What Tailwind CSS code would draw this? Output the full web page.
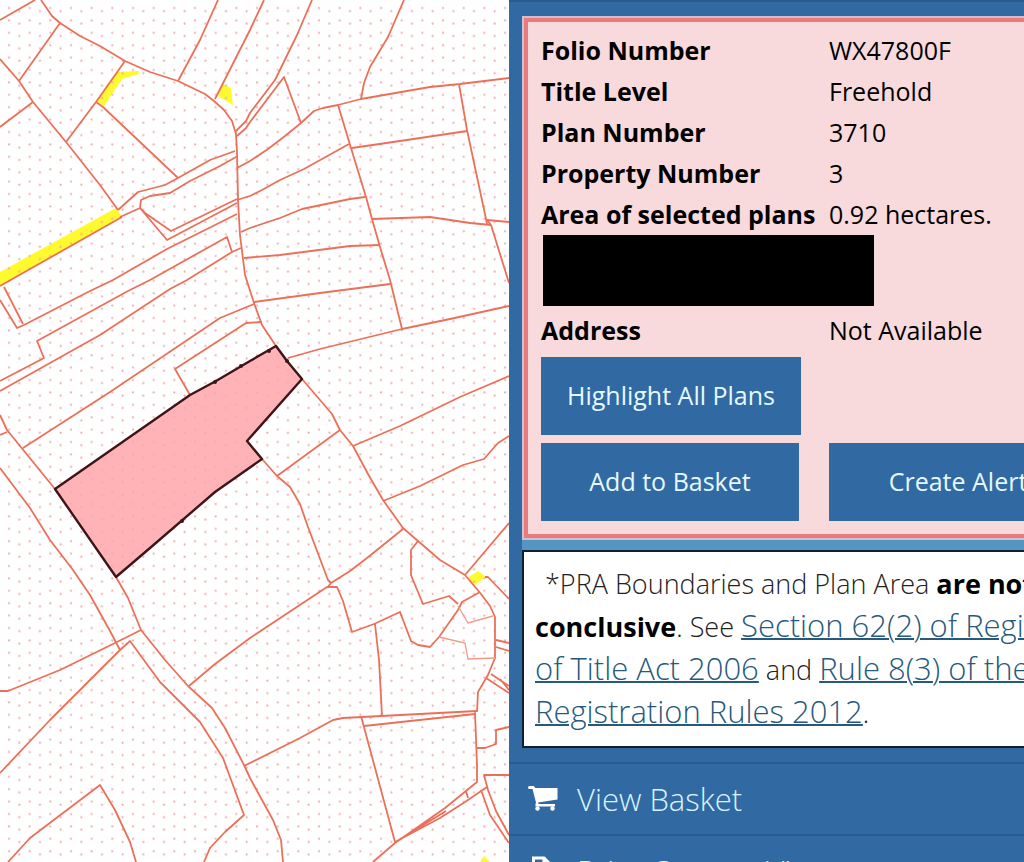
<!DOCTYPE html>
<html lang="en">
<head>
  <meta charset="UTF-8" />
  <meta name="viewport" content="width=device-width, initial-scale=1.0" />
  <title>Folio WX47800F</title>
  <script src="https://cdn.jsdelivr.net/npm/@tailwindcss/browser@4"></script>
</head>
<body class="bg-[#316aa3] font-['Open_Sans','Noto_Sans',sans-serif] text-black">
  <main class="grid grid-cols-[509fr_515fr] h-screen overflow-hidden">
    <section aria-label="Map" class="bg-white overflow-hidden">
      <svg class="w-full h-full" viewBox="0 0 509 862" preserveAspectRatio="xMinYMin slice" fill="none">
        <defs>
          <pattern id="dots" width="20.67" height="12.4" patternUnits="userSpaceOnUse">
            <circle cx="9" cy="8" r="1.100" fill="#eeaca8" />
            <circle cx="19.3" cy="11.2" r="1.100" fill="#eeaca8" />
          </pattern>
        </defs>
        <!-- rights of way -->
        <g fill="#fffa2e">
          <path d="M0 272L116 208L122 217L0 286Z" />
          <path d="M117 72L139 71L139 74L122 79L104 106L96 101Z" />
          <path d="M223 84L231 88L233 105L218 96Z" />
          <path d="M467 578L478 571L486 577L475 585Z" />
          <path d="M480 862L484 856L490 862Z" />
        </g>
        <path d="M55 489L190 395L250 361L276 346L287 361L302 379L247 441L262 459L215 492L150 548L116 577Z" fill="#ffb3b7" />
        <rect width="509" height="862" fill="url(#dots)" />
        <!-- boundaries -->
        <g stroke="#ec7059" stroke-width="1.8" stroke-linejoin="round">
          <path d="M0 20L35 0M41 0L52 16L60 23L80 36L100 46L125 61L150 72L178 81L205 94L214 101L224 110L232 121L236 134L237 152L238 200L240 235L245 275L254 303L262 325L276 346M302 379L320 400L332 414L340 430L353 446L368 474L383 500L403 528L418 541L440 560L465 575L481 594L490 606L495 617V658L488 675L478 692L477 712" />
          <path d="M60 23L19 81M0 59L19 81L33 102L66 142L100 185L118 210M0 127L33 102M125 61L96 102L66 142M96 102L103 107L178 178M218 0L200 40L178 81M264 0L250 30L215 99" />
          <path d="M312 0L297 35L275 80L250 113L246 121L236 131M301 123L284 77L250 122L246 128L237 136" />
          <path d="M237 168L250 161L268 149L285 136L301 123L314 111L323 108L338 105L361 99L430 87L460 84L509 78M404 0L388 37L370 67L364 83L361 99" />
          <path d="M338 105L351 148L366 197L372 219L380 247L390 280L402 329M459 84L467 130L486 219L487 224M491 225L509 283M352 148L400 141L467 131" />
          <path d="M237 200L250 196L262 190L280 180L304 169L349 144M241 232L250 228L280 218L302 209L350 199L365 197M244 258L280 255L350 246L380 245M254 302L320 293L390 284M372 219L430 217L470 223L491 225L487 220L509 222" />
          <path d="M288 358L320 349L402 329L450 319L509 306M353 446L400 426L460 397L509 376M383 501L420 486L463 465L484 459L498 443L509 436" />
          <path d="M262 459L277 476L290 487L300 504L308 527L328 580L331 583L327 588M277 476L340 430M331 583L350 571L367 558L403 529" />
          <path d="M189 686L215 664L250 638L327 587L337 587L343 601L352 632L374 624L400 612L411 641L418 645L430 647L439 637L458 610L462 602L480 592M400 612L401 615M418 541L411 550L411 575L413 580L423 604L449 596L458 604M375 624L379 660L382 716" />
          <path d="M244 766L300 738L333 720L343 718L477 711M364 726L475 714M361 716L395 842M373 862L395 843L445 808L477 782V765L475 712M395 842L440 818L465 802L487 787M397 841L446 811M466 791L468 798" />
          <path d="M476 748L485 748L496 744V730L509 727M509 775H484L488 790L496 811L509 835M481 790L490 815L509 843M491 674L509 686M486 678L509 693M500 679L509 690M496 640L509 643M496 647L509 651M465 575L509 523M485 577L488 577L509 599" />
          <path d="M118 210L138 192L165 185L178 178L210 160L235 151M120 217L140 208L141 200L150 196L170 193L190 181L220 166L236 157M140 208L145 213L171 231L237 199M140 208L167 240L237 203" />
          <path d="M0 286L122 217M4 287L23 324M0 300L17 328L24 325L90 291L113 280L167 249L237 214M0 381L44 358L37 341L128 291L150 280L227 237L232 252L241 248M0 391L100 335L170 289L187 280L232 252" />
          <path d="M23 448L110 392L220 318L254 304M190 395L175 369L246 323L262 322M0 415L7 430L55 489M0 435L7 432M0 468L30 508L50 540L73 570L90 595L110 631L120 650" />
          <path d="M116 577L128 598L141 630L165 660L188 686L212 708L225 728L244 765L250 778L262 800L273 820L281 840L283 862M0 691L8 691L60 670L117 642L141 630M0 773L50 720L120 650L130 641L160 682L200 722L223 758L244 815L225 832L210 848L204 862" />
          <path d="M8 862L30 838L100 785L115 810L130 842L136 862" />
        </g>
        <path d="M458 606L468 623L493 616M439 637L465 643L468 659L495 658" stroke="#f09a88" stroke-width="1.3" />
        <path d="M55 489L190 395L216 381L250 361L276 346L287 361L302 379L247 441L262 459L215 492L150 548L116 577Z" stroke="#3d1519" stroke-width="2.4" stroke-linejoin="round" />
        <g fill="#3d1519">
          <circle cx="215" cy="382" r="2" /><circle cx="241" cy="366" r="2" /><circle cx="269" cy="351" r="2" /><circle cx="287" cy="361" r="2" /><circle cx="182" cy="521" r="2" />
        </g>
      </svg>
    </section>

    <aside class="overflow-hidden border-t-2 border-[#285b90]">
      <div class="w-[604px] pt-[14px] pl-[13px]">
        <section class="border-2 border-[#cfbfd0] bg-[#f8dadc]">
          <div class="border-4 border-[#ea7a7c] px-[13px] pt-2 pb-[13px]">
            <table class="w-full table-fixed text-[25px] leading-[41px] text-left whitespace-nowrap">
              <colgroup><col class="w-[288px]" /><col /></colgroup>
              <tbody>
                <tr><th>Folio Number</th><td>WX47800F</td></tr>
                <tr><th>Title Level</th><td>Freehold</td></tr>
                <tr><th>Plan Number</th><td>3710</td></tr>
                <tr><th>Property Number</th><td>3</td></tr>
                <tr><th>Area of selected plans</th><td>0.92 hectares.</td></tr>
                <tr><td colspan="2"><div class="ml-[2px] mb-1 w-[331px] h-[71px] bg-black"></div></td></tr>
                <tr><th>Address</th><td>Not Available</td></tr>
              </tbody>
            </table>
            <div class="grid grid-cols-[258px_258px] gap-x-[30px] gap-y-2 mt-[6px] text-[25px] text-[#e6f8ff]">
              <button class="w-[260px] h-[78px] bg-[#316aa3] whitespace-nowrap">Highlight All Plans</button>
              <button class="col-start-1 h-[78px] bg-[#316aa3]">Add to Basket</button>
              <button class="h-[78px] bg-[#316aa3]">Create Alert</button>
            </div>
          </div>
        </section>

        <div class="bg-[#5595c1] pt-[10px]">
          <p class="border-2 border-[#10202c] bg-white pl-[11px] pt-[10px] pb-[12px] text-[27px] leading-[43px] font-light text-[#222] whitespace-nowrap">
            <span class="pl-[10px]">*PRA Boundaries and Plan Area</span> <b class="font-bold text-black">are not</b><br />
            <b class="font-bold text-black">conclusive</b>. See <a href="#" class="text-[31px] leading-none text-[#26597c] underline decoration-2">Section 62(2) of Registration</a><br />
            <a href="#" class="text-[31px] leading-none text-[#26597c] underline decoration-2">of Title Act 2006</a> and <a href="#" class="text-[31px] leading-none text-[#26597c] underline decoration-2">Rule 8(3) of the Land</a><br />
            <a href="#" class="text-[31px] leading-none text-[#26597c] underline decoration-2">Registration Rules 2012</a>.
          </p>
        </div>
      </div>

      <nav class="mt-[14px] text-[31px] font-light text-[#d9f3ff] whitespace-nowrap">
        <a href="#" class="flex items-center gap-[19px] h-[72px] pl-[19px] border-t-2 border-[#285b90]">
          <svg class="w-[30px] h-[26px]" viewBox="0 0 30 26" fill="#fff">
            <path d="M0 1.500Q0 0 1.500 0H5.500Q6.500 0 7 2H29.500V13.500L10 16.500L10.500 18H27V20.500H7.500V18L8 16.500L4.500 3H1.500Q0 3 0 1.500Z" />
            <circle cx="9.500" cy="22.500" r="2.200" /><circle cx="24.500" cy="22.500" r="2.200" />
          </svg>
          View Basket
        </a>
        <a href="#" class="flex items-center gap-[19px] h-[72px] pl-[19px] border-t-2 border-[#285b90]">
          <svg class="w-[30px] h-[30px]" viewBox="0 0 30 30" fill="none" stroke="#fff" stroke-width="3">
            <path d="M5.500 30V2H16L23 9V30M16 2V9H23" />
          </svg>
          Print Current View
        </a>
      </nav>
    </aside>
  </main>
</body>
</html>
